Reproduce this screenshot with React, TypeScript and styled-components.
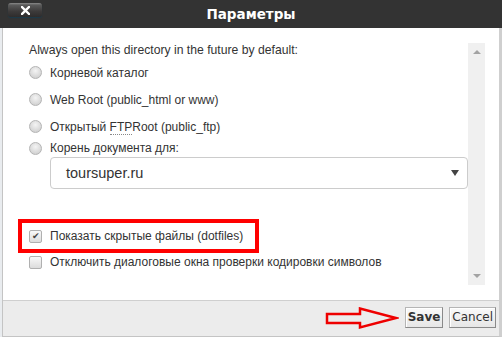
import styled, { createGlobalStyle } from 'styled-components'

const Global = createGlobalStyle`
  html, body { margin: 0; padding: 0; }
  body {
    background: #e9ecef;
    font-family: 'Liberation Sans', Arial, sans-serif;
    color: #333;
  }
`

const Window = styled.div`
  width: 502px;
  height: 337px;
  display: flex;
  flex-direction: column;
  overflow: hidden;
`

const TitleBar = styled.div`
  position: relative;
  height: 28px;
  background: #333;
  display: flex;
  align-items: center;
  justify-content: center;
  flex-shrink: 0;
`

const CloseButton = styled.div`
  position: absolute;
  left: 8px;
  top: 3px;
  width: 34px;
  height: 14px;
  border-radius: 3px;
  background: linear-gradient(#8a8a8a 0%, #5a5a5a 15%, #3c3a3a 60%, #2e2c2c 100%);
  box-shadow: 0 1px 1px #1b3a4a;
  display: flex;
  align-items: center;
  justify-content: center;
`

const Title = styled.div`
  color: #fff;
  font: bold 13.5px 'DejaVu Sans', Verdana, sans-serif;
`

const Frame = styled.div`
  flex: 1;
  display: flex;
  flex-direction: column;
  margin: 0 0 0 2px;
  border-left: 1px solid #c4c4c4;
  border-right: 3px solid #cfcfcf;
  border-bottom: 1px solid #c4c4c4;
  background: #fff;
`

const Body = styled.div`
  height: 272px;
  display: flex;
  flex-shrink: 0;
`

const Content = styled.div`
  flex: 1;
  padding: 14px 0 0 26px;
  font-size: 12px;
`

const Heading = styled.div`
  height: 16px;
  line-height: 16px;
  margin-bottom: 1px;
  font-size: 12.2px;
`

const Row = styled.div<{ $h: number }>`
  height: ${(p) => p.$h}px;
  display: flex;
  align-items: center;
  gap: 8px;
`

const Radio = styled.span`
  width: 11px;
  height: 11px;
  border-radius: 50%;
  border: 1px solid #b4b4b4;
  background: radial-gradient(circle at 50% 35%, #f4f4f4 0%, #dcdcdc 55%, #c8c8c8 100%);
  flex-shrink: 0;
`

const Check = styled.span`
  width: 11px;
  height: 11px;
  border-radius: 2px;
  border: 1px solid #b0b0b0;
  background: linear-gradient(#f8f8f8, #dcdcdc);
  flex-shrink: 0;
  display: flex;
  align-items: center;
  justify-content: center;
  color: #444;
  font-size: 9px;
  line-height: 1;
`

const Dotted = styled.span`
  border-bottom: 1px dotted #888;
`

const Select = styled.div`
  margin: 1px 0 0 21px;
  height: 30px;
  border: 1px solid #ccc;
  border-radius: 4px;
  display: flex;
  align-items: center;
  justify-content: space-between;
  padding: 0 8px 0 15px;
  width: 393px;
  font-size: 14.5px;
  color: #333;
`

const Caret = styled.span`
  width: 0;
  height: 0;
  border-left: 4px solid transparent;
  border-right: 4px solid transparent;
  border-top: 6px solid #444;
`

const Highlight = styled.div`
  margin: 30px 0 0 -11px;
  display: inline-flex;
  border: 4px solid #f00;
  padding: 0 12px 0 7px;
  height: 26px;
  align-items: center;
  gap: 8px;
`

const Scrollbar = styled.div`
  width: 17px;
  margin: 15px 14px 15px 0;
  background: #f0f0f0;
  display: flex;
  flex-direction: column;
  justify-content: space-between;
  align-items: center;
  padding: 7px 0;
`

const Arrow = styled.span<{ $up?: boolean }>`
  width: 0;
  height: 0;
  border-left: 4px solid transparent;
  border-right: 4px solid transparent;
  ${(p) => (p.$up ? 'border-bottom: 4px solid #a3a3a3;' : 'border-top: 4px solid #a3a3a3;')}
`

const Footer = styled.div`
  flex: 1;
  border-top: 1px solid #cfcfcf;
  background: #ececec;
  display: flex;
  align-items: flex-start;
  justify-content: flex-end;
  padding: 6px 3px 0 0;
  gap: 6px;
`

const Button = styled.button<{ $bold?: boolean }>`
  height: 21px;
  padding: 0 2px;
  margin: 0;
  border: 1px solid #b5b5b5;
  border-right-color: #8a8a8a;
  border-bottom-color: #8a8a8a;
  background: linear-gradient(#fafafa, #e6e6e6);
  box-shadow: inset 1px 1px 0 #fff;
  font: ${(p) => (p.$bold ? 'bold' : 'normal')} 12px 'DejaVu Sans', Verdana, sans-serif;
  color: #333;
  line-height: 19px;
`

const CloseIcon = () => (
  <svg width="9" height="9" viewBox="0 0 9 9">
    <path d="M1 1 L8 8 M8 1 L1 8" stroke="#fff" strokeWidth="2.4" strokeLinecap="square" />
  </svg>
)

const PointerArrow = () => (
  <svg width="74" height="26" viewBox="0 0 74 26">
    <path
      d="M2 7 L35 7 L35 1.5 L71 11 L35 20.5 L35 16 L2 16 Z"
      fill="none"
      stroke="#e00"
      strokeWidth="2.5"
      strokeLinejoin="miter"
    />
  </svg>
)

export default function App() {
  return (
    <>
      <Global />
      <Window>
        <TitleBar>
          <CloseButton>
            <CloseIcon />
          </CloseButton>
          <Title>Параметры</Title>
        </TitleBar>
        <Frame>
          <Body>
            <Content>
              <Heading>Always open this directory in the future by default:</Heading>
              <Row $h={27}>
                <Radio />
                Корневой каталог
              </Row>
              <Row $h={27}>
                <Radio />
                Web Root (public_html or www)
              </Row>
              <Row $h={27}>
                <Radio />
                <span>
                  Открытый <Dotted>FTP</Dotted>Root (public_ftp)
                </span>
              </Row>
              <Row $h={16}>
                <Radio />
                Корень документа для:
              </Row>
              <Select>
                toursuper.ru
                <Caret />
              </Select>
              <Highlight>
                <Check>✔</Check>
                Показать скрытые файлы (dotfiles)
              </Highlight>
              <Row $h={18}>
                <Check />
                Отключить диалоговые окна проверки кодировки символов
              </Row>
            </Content>
            <Scrollbar>
              <Arrow $up />
              <Arrow />
            </Scrollbar>
          </Body>
          <Footer>
            <PointerArrow />
            <Button $bold>Save</Button>
            <Button>Cancel</Button>
          </Footer>
        </Frame>
      </Window>
    </>
  )
}
